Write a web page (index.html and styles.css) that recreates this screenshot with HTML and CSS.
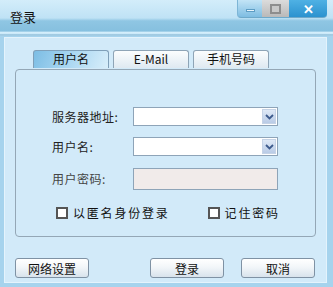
FILE: index.html
```html
<!DOCTYPE html>
<html lang="zh">
<head>
    <meta charset="UTF-8">
    <title>登录</title>
    <link rel="stylesheet" href="styles.css">
</head>
<body>
    <div class="window">
        <div class="titlebar">
            <div class="title">登录</div>
            <div class="controls">
                <div class="ctl ctl-min"><span class="min-bar"></span></div>
                <div class="ctl ctl-max"><span class="max-box"></span></div>
                <div class="ctl ctl-close">&#x2715;</div>
            </div>
        </div>
        <div class="client">
            <div class="tabs">
                <div class="tab active">用户名</div>
                <div class="tab">E-Mail</div>
                <div class="tab">手机号码</div>
            </div>
            <div class="group">
                <div class="form">
                    <label>服务器地址:</label>
                    <div class="combo"><span class="arrow">
                        <svg width="9" height="6" viewBox="0 0 9 6"><path d="M1 1 L4.5 4.5 L8 1" fill="none" stroke="#3d5a8c" stroke-width="1.8"/></svg>
                    </span></div>
                    <label>用户名:</label>
                    <div class="combo"><span class="arrow">
                        <svg width="9" height="6" viewBox="0 0 9 6"><path d="M1 1 L4.5 4.5 L8 1" fill="none" stroke="#3d5a8c" stroke-width="1.8"/></svg>
                    </span></div>
                    <label class="lbl-pwd">用户密码:</label>
                    <div class="pwd"></div>
                </div>
                <div class="checks">
                    <div class="check"><span class="box"></span>以匿名身份登录</div>
                    <div class="check"><span class="box"></span>记住密码</div>
                </div>
            </div>
            <div class="buttons">
                <button class="btn">网络设置</button>
                <div class="right-btns">
                    <button class="btn">登录</button>
                    <button class="btn">取消</button>
                </div>
            </div>
        </div>
    </div>
</body>
</html>
```
FILE: styles.css
```css
*
{
    box-sizing: border-box;
    font-family: "Noto Sans CJK SC", "Liberation Sans", sans-serif;
}

body
{
    margin: 0;
    background: #a9d5ee;
}

.window
{
    width: 333px;
    height: 287px;
    background: #a6d3ed;
    display: flex;
    flex-direction: column;
    overflow: hidden;
}

.titlebar
{
    height: 36px;
    display: flex;
    justify-content: space-between;
    align-items: flex-start;
    background: linear-gradient(#d3edfa 0, #bfe2f5 50%, #8fc6e3 58%, #86c0df 86%, #d4eefb 90%, #c9e8f8 94%, #88b8d4 97%, #b9def2 100%);
}

.title
{
    font-size: 13px;
    color: #111;
    padding: 9px 0 0 10px;
    line-height: 16px;
}

.controls
{
    display: flex;
    margin-right: 6px;
}

.ctl
{
    height: 18px;
    display: flex;
    align-items: center;
    justify-content: center;
    border-bottom: 1px solid #6ea9ca;
}

.ctl-min
{
    width: 25px;
    background: linear-gradient(#c3e4f6, #7ebde2);
    border-left: 1px solid #7db5d6;
    border-radius: 0 0 0 4px;
}

.min-bar
{
    display: block;
    width: 9px;
    height: 3px;
    margin-top: 4px;
    background: #e8f4fb;
    border: 1px solid #5d9dc4;
}

.ctl-max
{
    width: 27px;
    background: linear-gradient(#dcdcdc, #b9b9b9);
}

.max-box
{
    display: block;
    width: 11px;
    height: 10px;
    border: 2px solid #8d8d8d;
    background: #c8c8c8;
}

.ctl-close
{
    width: 38px;
    color: #fff;
    font-size: 13px;
    font-weight: bold;
    background: linear-gradient(#4fb1e4, #2b92cf);
    border-radius: 0 0 4px 0;
}

.client
{
    flex: 1;
    margin: 1px 6px 4px 4px;
    background: #d2eaf9;
    border: 1px solid #e4f3fc;
    position: relative;
}

.tabs
{
    display: flex;
    gap: 4px;
    margin: 12px 0 0 28px;
    height: 18px;
}

.tab
{
    width: 76px;
    height: 18px;
    font-size: 12px;
    line-height: 16px;
    text-align: center;
    color: #111;
    border: 1px solid #8ea4b6;
    border-bottom: none;
    border-radius: 3px 3px 0 0;
    background: linear-gradient(#fbfdfe, #dfe9f1);
}

.tab.active
{
    background: linear-gradient(115deg, #7cbde4 0, #a6d5f1 45%, #d8eefa 100%);
    border-color: #7f9fb8;
}

.group
{
    margin: 1px 10px 0 10px;
    height: 168px;
    border: 1px solid #94a7b6;
    border-radius: 4px;
    padding: 37px 0 0 36px;
}

.form
{
    display: grid;
    grid-template-columns: 81px 145px;
    grid-template-rows: 19px 19px 22px;
    row-gap: 11px;
    align-items: center;
}

.form label
{
    font-size: 12px;
    color: #222;
    letter-spacing: 0.5px;
}

.form .lbl-pwd
{
    color: #444;
}

.combo
{
    height: 19px;
    background: #fff;
    border: 1px solid #8ea4b8;
    display: flex;
    justify-content: flex-end;
    align-items: center;
    padding-right: 1px;
}

.arrow
{
    width: 14px;
    height: 15px;
    display: flex;
    align-items: center;
    justify-content: center;
    background: linear-gradient(#dfe9f6, #b9cbe6);
    border: 1px solid #c5d3e6;
}

.pwd
{
    height: 22px;
    margin-top: 1px;
    background: #f1ebea;
    border: 1px solid #8ea4b8;
}

.checks
{
    display: flex;
    gap: 38px;
    margin: 15px 0 0 4px;
}

.check
{
    display: flex;
    align-items: center;
    font-size: 12px;
    letter-spacing: 1.8px;
    color: #111;
}

.box
{
    width: 12px;
    height: 12px;
    border: 2px solid #555;
    background: #fff;
    margin-right: 5px;
}

.buttons
{
    display: flex;
    justify-content: space-between;
    margin: 21px 11px 0 10px;
}

.right-btns
{
    display: flex;
    gap: 17px;
}

.btn
{
    width: 74px;
    height: 20px;
    padding: 0;
    font-size: 12px;
    color: #111;
    border: 1px solid #7f92a4;
    border-radius: 3px;
    background: linear-gradient(#ffffff, #f2f6f9 45%, #d8e3ec);
}
```
